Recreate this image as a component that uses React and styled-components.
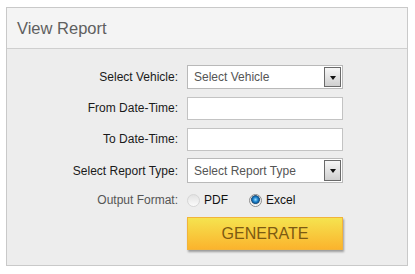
import React from "react";
import styled, { createGlobalStyle } from "styled-components";

const Global = createGlobalStyle`
  html, body { margin: 0; padding: 0; background: #fff; }
  body { font-family: Arial, "Liberation Sans", sans-serif; }
`;

const Page = styled.div`
  padding: 7px 0 0 6px;
`;

const Panel = styled.section`
  box-sizing: border-box;
  width: 402px;
  border: 1px solid #c9c9c9;
  background: #ededed;
`;

const Header = styled.header`
  height: 40px;
  display: flex;
  align-items: center;
  padding: 0 10px;
  background: #f4f4f4;
  border-bottom: 1px solid #cfcfcf;
  color: #5f5f5f;
  font-size: 16.5px;
`;

const Form = styled.div`
  display: grid;
  grid-template-columns: 171px 156px;
  grid-template-rows: 24px 24px 24px 25px 20px 33px;
  column-gap: 9px;
  row-gap: 7px;
  align-items: center;
  padding: 16px 0 15px 0;
`;

const Label = styled.label`
  text-align: right;
  font-size: 12px;
  color: ${(p) => (p.$muted ? "#555" : "#1a1a1a")};
`;

const SelectBox = styled.div`
  box-sizing: border-box;
  height: ${(p) => p.$h}px;
  border: 1px solid #b9b9b9;
  background: #fff;
  display: flex;
  align-items: center;
  justify-content: space-between;
  padding: 0 1px 0 6px;
  font-size: 12px;
  color: #555;
`;

const Arrow = styled.span`
  box-sizing: border-box;
  width: 17px;
  height: calc(100% - 2px);
  border: 1px solid #6a6a6a;
  background: linear-gradient(#f7f7f7, #cfcfcf);
  display: flex;
  align-items: center;
  justify-content: center;
  &::after {
    content: "";
    border-left: 3.5px solid transparent;
    border-right: 3.5px solid transparent;
    border-top: 4px solid #111;
    margin-top: 1px;
  }
`;

const TextInput = styled.input`
  box-sizing: border-box;
  width: 156px;
  height: 23px;
  border: 1px solid #c3c3c3;
  background: #fff;
  margin: 0;
  outline: none;
`;

const RadioGroup = styled.div`
  display: flex;
  align-items: center;
  font-size: 12px;
  color: #111;
`;

const RadioItem = styled.span`
  display: flex;
  align-items: center;
  gap: 4px;
  margin-right: ${(p) => p.$mr || 0}px;
`;

const Radio = styled.span`
  box-sizing: border-box;
  width: 13px;
  height: 13px;
  border-radius: 50%;
  border: 1px solid ${(p) => (p.$on ? "#8c8c8c" : "#d6d6d6")};
  background: ${(p) =>
    p.$on
      ? "radial-gradient(circle at 50% 42%, #9fe0ff 0, #2a8fd6 2px, #0d5a9a 3.6px, #3a5f80 4.2px, #dcdcdc 4.6px, #fff 6px)"
      : "linear-gradient(#e2e2e2, #fbfbfb)"};
`;

const Button = styled.button`
  box-sizing: border-box;
  width: 156px;
  height: 33px;
  border: 1px solid #f2b43a;
  background: linear-gradient(#f5e34f, #fbb42d);
  box-shadow: 1px 2px 2px rgba(0, 0, 0, 0.35);
  color: #7c5a12;
  font-family: Arial, "Liberation Sans", sans-serif;
  font-size: 16px;
  padding: 0;
  cursor: pointer;
`;

export default function App() {
  return (
    <>
      <Global />
      <Page>
        <Panel>
          <Header>View Report</Header>
          <Form>
            <Label>Select Vehicle:</Label>
            <SelectBox $h={24}>
              Select Vehicle
              <Arrow />
            </SelectBox>
            <Label>From Date-Time:</Label>
            <TextInput />
            <Label>To Date-Time:</Label>
            <TextInput />
            <Label>Select Report Type:</Label>
            <SelectBox $h={25}>
              Select Report Type
              <Arrow />
            </SelectBox>
            <Label $muted>Output Format:</Label>
            <RadioGroup>
              <RadioItem $mr={21}>
                <Radio />
                PDF
              </RadioItem>
              <RadioItem>
                <Radio $on />
                Excel
              </RadioItem>
            </RadioGroup>
            <span />
            <Button>GENERATE</Button>
          </Form>
        </Panel>
      </Page>
    </>
  );
}
